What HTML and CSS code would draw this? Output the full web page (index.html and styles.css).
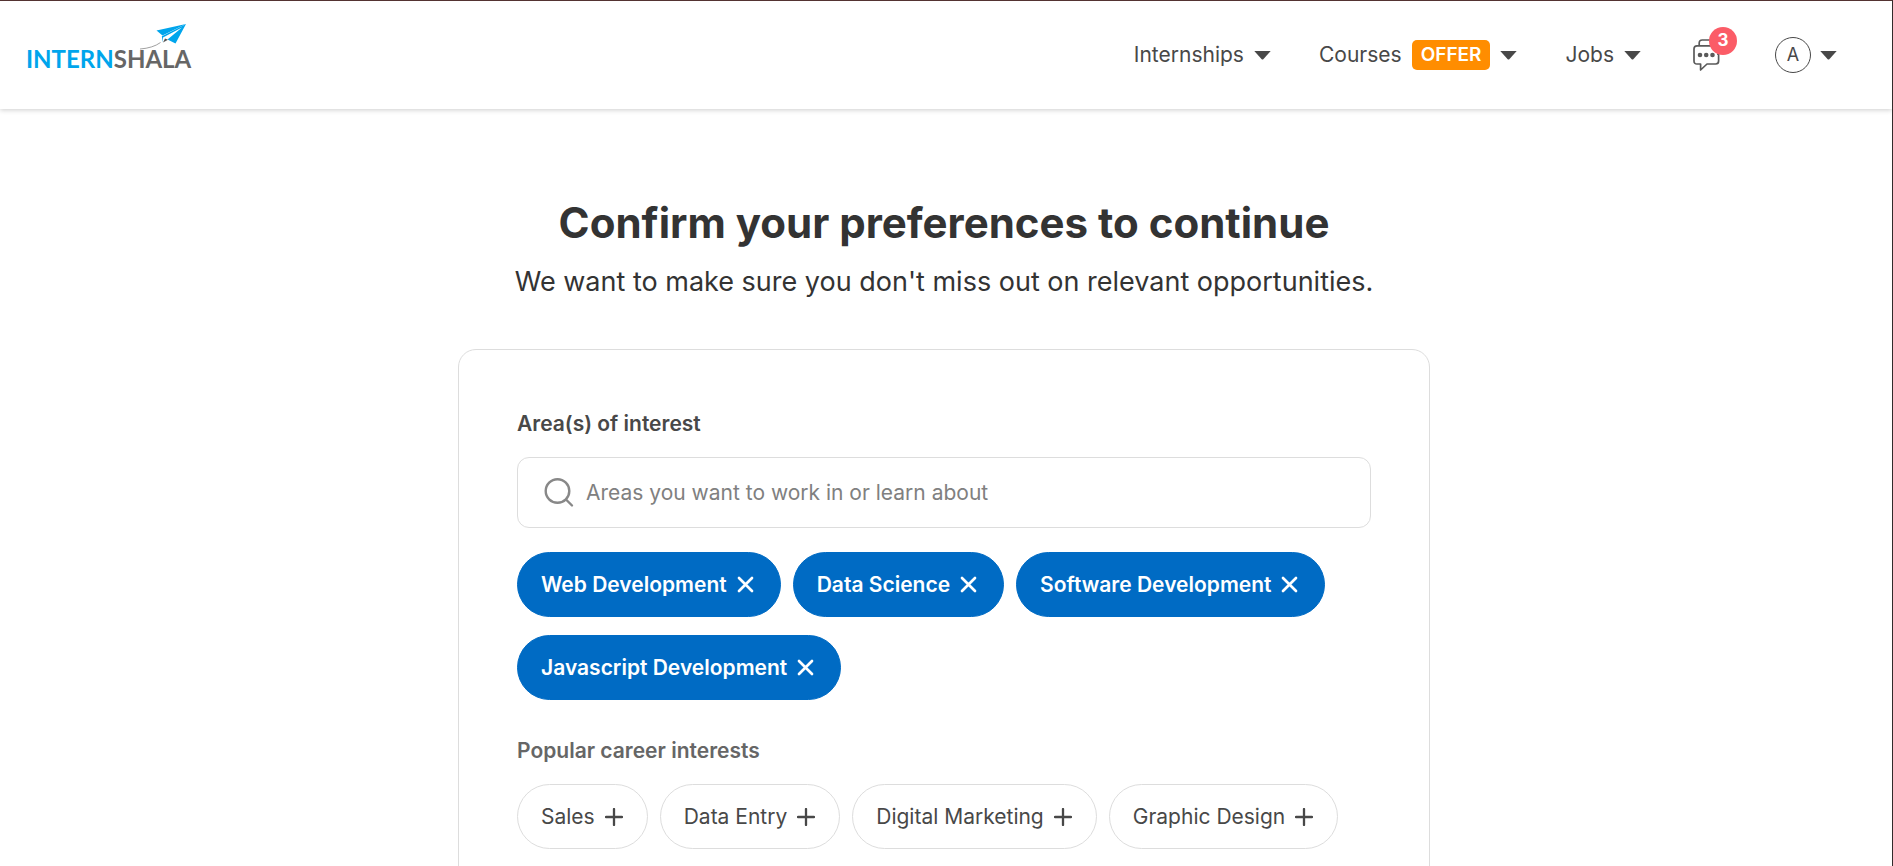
FILE: index.html
```html
<!DOCTYPE html>
<html lang="en">
<head>
<meta charset="utf-8">
<title>Confirm your preferences | Internshala</title>
<link rel="stylesheet" href="styles.css">
</head>
<body>
<svg class="sprite" aria-hidden="true">
  <symbol id="caret" viewBox="0 0 17 9"><path d="M.3 0h16.4L9.3 8.2q-.8.8-1.6 0z" fill="currentColor"/></symbol>
  <symbol id="cross" viewBox="0 0 17 17"><path d="M2 2l13 13M15 2L2 15" stroke="currentColor" stroke-width="2.7" stroke-linecap="round"/></symbol>
  <symbol id="plus" viewBox="0 0 18 18"><path d="M9 1v16M1 9h16" stroke="currentColor" stroke-width="2.3" stroke-linecap="round"/></symbol>
</svg>

<header class="header">
  <a class="logo" href="#" aria-label="Internshala home">
    <span class="logo-intern">INTERN</span><span class="logo-shala">SHALA</span>
    <svg class="logo-plane" viewBox="0 0 48 28" aria-hidden="true">
      <path d="M47 1L17.500 7.500L23.500 12.500Z" fill="#00a5ec"/>
      <path d="M47 1L36.500 20.500L28.500 16.500L43 4.500L24 14.500L24 19.500L22.800 13.200Z" fill="#00a5ec"/>
      <path d="M24 19.500L26 15.500L29 16.800Z" fill="#555"/>
      <path d="M1 26Q14 25 21.500 19.500" fill="none" stroke="#777" stroke-width=".7"/>
    </svg>
  </a>
  <nav class="nav">
    <a class="nav-item" href="#">Internships <svg class="caret"><use href="#caret"/></svg></a>
    <a class="nav-item" href="#">Courses <span class="offer">OFFER</span> <svg class="caret"><use href="#caret"/></svg></a>
    <a class="nav-item" href="#">Jobs <svg class="caret"><use href="#caret"/></svg></a>
    <button class="chat" type="button" aria-label="Messages, 3 unread">
      <svg class="chat-icon" viewBox="0 0 28 32" fill="none" stroke="#5a5a5a" stroke-width="1.7" stroke-linejoin="round">
        <path d="M6.200 6.800V4Q6.200 1 9.200 1H22Q25 1 25 4V16"/>
        <path d="M4 6.800H22.500Q25.600 6.800 25.600 9.800V22Q25.600 25 22.600 25H14L7.600 31V25H4Q1 25 1 22V9.800Q1 6.800 4 6.800Z"/>
        <g fill="#5a5a5a" stroke="none"><circle cx="7" cy="16" r="2.300"/><circle cx="13.200" cy="16" r="2.300"/><circle cx="19.500" cy="16" r="2.300"/></g>
      </svg>
      <span class="count">3</span>
    </button>
    <button class="profile" type="button" aria-label="Profile menu"><span class="avatar">A</span><svg class="caret"><use href="#caret"/></svg></button>
  </nav>
</header>

<main class="main">
  <h1 class="title">Confirm your preferences to continue</h1>
  <p class="subtitle">We want to make sure you don't miss out on relevant opportunities.</p>

  <form class="card">
    <label class="label" for="areas">Area(s) of interest</label>
    <div class="search">
      <svg class="search-icon" viewBox="0 0 30 30" fill="none" stroke="#888" stroke-width="2.400" stroke-linecap="round"><circle cx="13.500" cy="13" r="11.800"/><path d="M22 21.500l6 6"/></svg>
      <input class="search-input" id="areas" type="text" placeholder="Areas you want to work in or learn about">
    </div>
    <div class="chips">
      <button class="chip chip-on" type="button">Web Development <svg class="cross"><use href="#cross"/></svg></button>
      <button class="chip chip-on" type="button">Data Science <svg class="cross"><use href="#cross"/></svg></button>
      <button class="chip chip-on" type="button">Software Development <svg class="cross"><use href="#cross"/></svg></button>
      <button class="chip chip-on" type="button">Javascript Development <svg class="cross"><use href="#cross"/></svg></button>
    </div>
    <h2 class="label label-popular">Popular career interests</h2>
    <div class="chips">
      <button class="chip" type="button">Sales <svg class="plus"><use href="#plus"/></svg></button>
      <button class="chip" type="button">Data Entry <svg class="plus"><use href="#plus"/></svg></button>
      <button class="chip" type="button">Digital Marketing <svg class="plus"><use href="#plus"/></svg></button>
      <button class="chip" type="button">Graphic Design <svg class="plus"><use href="#plus"/></svg></button>
    </div>
  </form>
</main>
</body>
</html>
```

FILE: styles.css
```css
* { box-sizing: border-box; }

html { height: 100%; }

body {
  margin: 0;
  height: 100%;
  overflow: hidden;
  border-top: 1px solid #533332;
  border-right: 1px solid #332b2b;
  background: #fff;
  color: #484848;
  font: 400 21px/32px Inter, "Liberation Sans", sans-serif;
}

button { font: inherit; color: inherit; cursor: pointer; }
svg { flex: none; }
.sprite { display: none; }

.header {
  display: flex;
  align-items: center;
  justify-content: space-between;
  height: 108px;
  padding: 0 55px 0 26px;
  box-shadow: 0 1px 5px rgba(0, 0, 0, .2);
}

.logo {
  position: relative;
  display: flex;
  margin-top: 7px;
  font: 700 24px/28px Lato, sans-serif;
  text-decoration: none;
}
.logo-intern { color: #00a5ec; }
.logo-shala { color: #666; }
.logo-plane {
  position: absolute;
  right: 4px;
  bottom: 22px;
  width: 48px;
  height: 28px;
}

.nav { display: flex; align-items: center; gap: 48px; }
.nav-item {
  display: flex;
  align-items: center;
  gap: 10px;
  color: inherit;
  text-decoration: none;
}
.caret { width: 17px; height: 9px; }
.offer {
  padding: 0 9px;
  border-radius: 5px;
  background: #ff8d00;
  color: #fff;
  font-size: 19px;
  font-weight: 600;
  line-height: 30px;
}

.chat {
  position: relative;
  margin-left: 4px;
  padding: 0;
  border: 0;
  background: none;
  line-height: 0;
}
.chat-icon { width: 28px; height: 32px; }
.count {
  position: absolute;
  top: -12px;
  left: 16px;
  width: 28px;
  height: 28px;
  border-radius: 50%;
  background: #fb5c67;
  color: #fff;
  font-size: 17px;
  font-weight: 700;
  line-height: 26px;
}

.profile {
  display: flex;
  align-items: center;
  gap: 9px;
  margin-left: 6px;
  padding: 0;
  border: 0;
  background: none;
}
.avatar {
  width: 36px;
  height: 36px;
  border: 1px solid #484848;
  border-radius: 50%;
  font-size: 18px;
  line-height: 33px;
  text-align: center;
}

.main { padding: 86px 20px 0 16px; text-align: center; }
.title {
  margin: 0;
  color: #333;
  font-size: 42px;
  font-weight: 700;
  line-height: 56px;
}
.subtitle {
  margin: 11px 0 0;
  color: #333;
  font-size: 27px;
  line-height: 40px;
}

.card {
  max-width: 972px;
  margin: 47px auto 0;
  padding: 58px;
  border: 1px solid #ddd;
  border-radius: 18px;
  text-align: left;
}
.label {
  display: block;
  margin: 0 0 17px;
  font-size: 21px;
  font-weight: 600;
  line-height: 32px;
}
.label-popular { margin-top: 35px; color: #666; }

.search {
  display: flex;
  align-items: center;
  gap: 12px;
  height: 71px;
  margin-bottom: 24px;
  padding: 0 26px;
  border: 1px solid #ddd;
  border-radius: 12px;
}
.search-icon { width: 30px; height: 30px; }
.search-input {
  flex: 1;
  min-width: 0;
  padding: 0;
  border: 0;
  outline: 0;
  background: none;
  font: inherit;
}
.search-input::placeholder { color: #808080; }

.chips { display: flex; flex-wrap: wrap; gap: 18px 12px; }
.chip {
  display: flex;
  align-items: center;
  gap: 10px;
  height: 65px;
  padding: 0 24px 0 23px;
  border: 1px solid #ddd;
  border-radius: 33px;
  background: #fff;
}
.chip-on {
  padding-right: 26px;
  border-color: #006bc4;
  background: #006bc4;
  color: #fff;
  font-weight: 600;
}
.cross { width: 17px; height: 17px; }
.plus { width: 18px; height: 18px; }
```
